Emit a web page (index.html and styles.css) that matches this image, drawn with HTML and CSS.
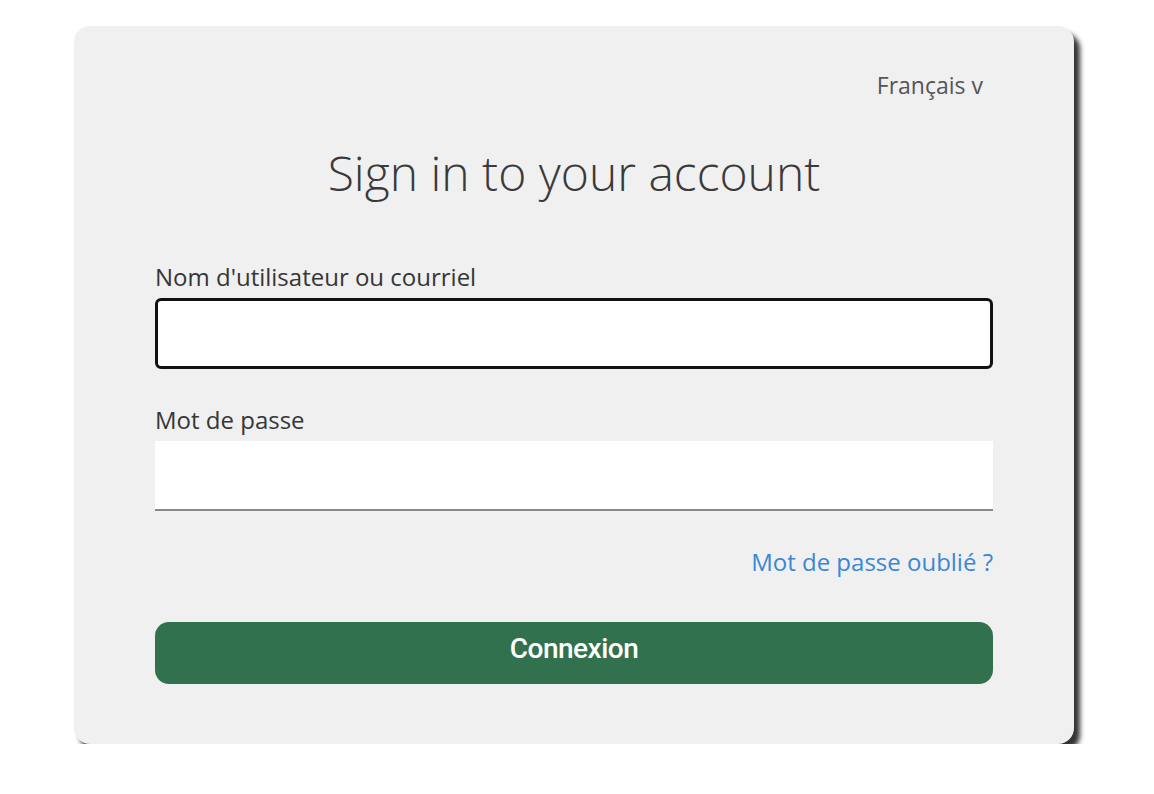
FILE: index.html
```html
<!DOCTYPE html>
<html lang="fr">
<head>
<meta charset="utf-8">
<title>Sign in</title>
<link rel="stylesheet" href="styles.css">
</head>
<body>
<div class="page">
  <div class="card">
    <div class="lang-row"><span class="lang">Français v</span></div>
    <h1 class="title">Sign in to your account</h1>
    <form class="form">
      <div class="field">
        <label class="label" for="user">Nom d'utilisateur ou courriel</label>
        <input class="input input-focus" id="user" type="text">
      </div>
      <div class="field">
        <label class="label" for="pass">Mot de passe</label>
        <input class="input input-plain" id="pass" type="password">
      </div>
      <div class="forgot-row"><a class="forgot" href="#">Mot de passe oublié ?</a></div>
      <button class="btn" type="button">Connexion</button>
    </form>
  </div>
</div>
</body>
</html>
```
FILE: styles.css
```css
html, body {
  margin: 0;
  padding: 0;
  background: #ffffff;
}
body {
  font-family: "Open Sans", "Noto Sans", sans-serif;
}
.page {
  padding: 26px 0 0 74px;
}
.card {
  width: 1000px;
  height: 718px;
  box-sizing: border-box;
  background: #f0f0f0;
  border-radius: 16px;
  box-shadow: 6px 7px 5px rgba(30, 30, 30, 0.9);
  padding: 0 81px 0 81px;
  display: flex;
  flex-direction: column;
}
.lang-row {
  display: flex;
  justify-content: flex-end;
  padding-top: 47px;
  padding-right: 10px;
}
.lang {
  font-size: 23px;
  color: #555555;
  line-height: 24px;
}
.title {
  margin: 48px 0 0 0;
  text-align: center;
  font-weight: 300;
  font-size: 48px;
  line-height: 56px;
  color: #3a3a3a;
}
.form {
  display: flex;
  flex-direction: column;
  margin-top: 61px;
}
.field {
  display: flex;
  flex-direction: column;
  margin-bottom: 36px;
}
.label {
  font-size: 24px;
  line-height: 30px;
  color: #363636;
  margin-bottom: 6px;
}
.input {
  box-sizing: border-box;
  height: 71px;
  width: 100%;
  background: #ffffff;
  font-size: 20px;
  outline: none;
}
.input-focus {
  border: 3px solid #111111;
  border-radius: 6px;
}
.input-plain {
  height: 70px;
  border: none;
  border-bottom: 2px solid #888888;
  border-radius: 0;
}
.forgot-row {
  display: flex;
  justify-content: flex-end;
}
.forgot {
  font-size: 24px;
  line-height: 30px;
  color: #3b87d4;
  text-decoration: none;
}
.btn {
  margin-top: 45px;
  height: 62px;
  width: 100%;
  border: none;
  border-radius: 14px;
  background: #32714d;
  color: #ffffff;
  padding: 0 0 10px 0;
  font-family: "Roboto", "DejaVu Sans Condensed", sans-serif;
  font-size: 28px;
  font-weight: 500;
  letter-spacing: -0.5px;
}
```
